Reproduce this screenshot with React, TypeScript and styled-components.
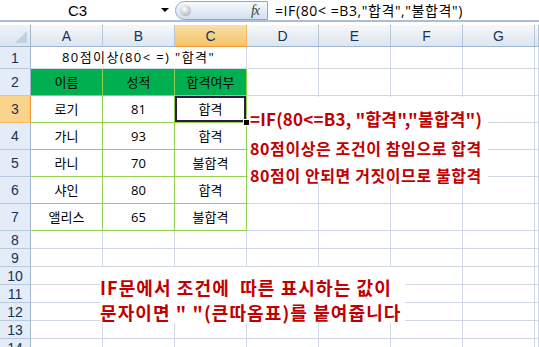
import { createGlobalStyle, styled, css } from "styled-components";

const FONT = `"Noto Sans CJK KR", "Noto Sans", sans-serif`;
const CELL_FONT = `"Open Sans", "Noto Sans CJK KR", sans-serif`;
const HEAD_FONT = `"Liberation Sans", "Noto Sans", sans-serif`;
const GRID = "#d0d7e5";
const GREEN_LINE = "#92d050";
const RED = "#c00000";

const GlobalStyle = createGlobalStyle`
  html, body {
    margin: 0;
    padding: 0;
    background: #fff;
  }
  body {
    font-family: ${FONT};
  }
`;

const Window = styled.div`
  width: 539px;
  height: 347px;
  overflow: hidden;
  background: #fff;
  display: flex;
  flex-direction: column;
`;

/* formula bar */
const FormulaBar = styled.div`
  display: flex;
  height: 23px;
  border-bottom: 2px solid #a9bed6;
  margin-bottom: 3px;
`;

const NameBox = styled.div`
  width: 155px;
  display: flex;
  align-items: center;
  justify-content: center;
  font-family: ${HEAD_FONT};
  font-size: 15px;
  color: #000;
`;

const DropArrow = styled.div`
  width: 20px;
  display: flex;
  align-items: center;
  justify-content: center;

  &::before {
    content: "";
    border-left: 4px solid transparent;
    border-right: 4px solid transparent;
    border-top: 4px solid #000;
  }
`;

const FxPill = styled.div`
  width: 93px;
  margin-top: 1px;
  box-sizing: border-box;
  display: flex;
  align-items: center;
  justify-content: space-between;
  padding: 0 8px 0 4px;
  border: 1px solid #8fa9c8;
  border-radius: 12px 0 0 12px;
  background: linear-gradient(#f6f9fc, #d3e0f0);
`;

const Knob = styled.span`
  width: 11px;
  height: 11px;
  border-radius: 50%;
  background: radial-gradient(circle at 40% 35%, #ffffff, #b9bec6 70%, #9aa1ab);
`;

const FxLabel = styled.span`
  font-family: "Liberation Serif", serif;
  font-style: italic;
  font-size: 14px;
  color: #444;
  letter-spacing: -1px;
`;

const FormulaText = styled.div`
  flex: 1;
  display: flex;
  align-items: center;
  padding-left: 7px;
  font-family: ${CELL_FONT};
  font-size: 14px;
  letter-spacing: 0.6px;
  color: #000;
  white-space: nowrap;
`;

/* sheet */
const Sheet = styled.div`
  position: relative;
  display: grid;
  grid-template-columns: 31px repeat(7, 72px) 1fr;
  grid-template-rows: 22px 22px 27px repeat(5, 27px) repeat(7, 18px);
`;

const Corner = styled.div`
  position: relative;
  box-sizing: border-box;
  background: linear-gradient(#eef3fa, #d9e3f0);
  border-right: 1px solid #9eb6ce;
  border-bottom: 1px solid #9eb6ce;

  &::after {
    content: "";
    position: absolute;
    right: 3px;
    bottom: 3px;
    border-left: 12px solid transparent;
    border-bottom: 12px solid #c4cfdc;
  }
`;

const ColHead = styled.div<{ $active?: boolean }>`
  box-sizing: border-box;
  display: flex;
  align-items: center;
  justify-content: center;
  font-family: ${HEAD_FONT};
  font-size: 14px;
  line-height: 1;
  color: #15325a;
  background: linear-gradient(#f6f8fb, #dde5ef);
  border-right: 1px solid #b5c6d9;
  border-bottom: 1px solid #9eb6ce;

  ${({ $active }) =>
    $active &&
    css`
      background: linear-gradient(#f9dea6, #f2c466);
      border-bottom-color: #f29436;
      border-right-color: #f2b864;
    `}
`;

const RowHead = styled.div<{ $active?: boolean }>`
  box-sizing: border-box;
  display: flex;
  align-items: center;
  justify-content: center;
  font-family: ${HEAD_FONT};
  font-size: 14px;
  line-height: 1;
  color: #15325a;
  background: #e4ecf7;
  border-right: 1px solid #9eb6ce;
  border-bottom: 1px solid #b8c9dc;

  ${({ $active }) =>
    $active &&
    css`
      background: #fbd48c;
      border-right-color: #f29436;
      border-bottom-color: #f2b864;
    `}
`;

type Tone = "plain" | "head" | "table";

const Cell = styled.div<{
  $tone?: Tone;
  $span?: number;
  $selected?: boolean;
  $track?: number;
}>`
  position: relative;
  box-sizing: border-box;
  display: flex;
  align-items: center;
  justify-content: center;
  font-family: ${CELL_FONT};
  font-size: 13px;
  line-height: 1;
  letter-spacing: ${({ $track }) => $track ?? 0}px;
  color: #000;
  white-space: nowrap;
  grid-column: span ${({ $span }) => $span ?? 1};
  border-right: 1px solid ${GRID};
  border-bottom: 1px solid ${GRID};

  ${({ $tone }) =>
    $tone === "head" &&
    css`
      background: #00b050;
      border-color: ${GREEN_LINE};
    `}

  ${({ $tone }) =>
    $tone === "table" &&
    css`
      border-color: ${GREEN_LINE};
    `}

  ${({ $selected }) =>
    $selected &&
    css`
      box-shadow: inset 0 0 0 2px #2e1a44;

      &::after {
        content: "";
        position: absolute;
        right: -4px;
        bottom: -4px;
        width: 5px;
        height: 5px;
        background: #000;
        border: 1px solid #fff;
        z-index: 2;
      }
    `}
`;

const NoteBox = styled.div`
  position: absolute;
  left: 248px;
  top: 72px;
  width: 240px;
  height: 86px;
  background: #fff;
  display: flex;
  flex-direction: column;
  padding-left: 2px;
  box-sizing: border-box;
`;

const NoteLine = styled.div<{ $size: number; $top: number; $track: number }>`
  font-size: ${({ $size }) => $size}px;
  letter-spacing: ${({ $track }) => $track}px;
  line-height: 22px;
  font-weight: 700;
  color: ${RED};
  white-space: pre;
  margin-top: ${({ $top }) => $top}px;
`;

const TipBox = styled.div`
  position: absolute;
  left: 100px;
  top: 242px;
  width: 305px;
  height: 56px;
  background: #fff;
  display: flex;
  flex-direction: column;
  padding-top: 8px;
  box-sizing: border-box;
`;

const TipLine = styled.div`
  font-size: 18px;
  line-height: 25px;
  font-weight: 700;
  color: ${RED};
  letter-spacing: 1.1px;
  white-space: pre;
`;

const COLS = ["A", "B", "C", "D", "E", "F", "G", ""];

const table = [
  ["로기", "81", "합격"],
  ["가니", "93", "합격"],
  ["라니", "70", "불합격"],
  ["샤인", "80", "합격"],
  ["앨리스", "65", "불합격"],
];

function Blank({ count }: { count: number }) {
  return (
    <>
      {Array.from({ length: count }, (_, i) => (
        <Cell key={i} />
      ))}
    </>
  );
}

export default function App() {
  return (
    <>
      <GlobalStyle />
      <Window>
        <FormulaBar>
          <NameBox>C3</NameBox>
          <DropArrow />
          <FxPill>
            <Knob />
            <FxLabel>fx</FxLabel>
          </FxPill>
          <FormulaText>=IF(80&lt; =B3,"합격","불합격")</FormulaText>
        </FormulaBar>

        <Sheet>
          <Corner />
          {COLS.map((c, i) => (
            <ColHead key={i} $active={c === "C"}>
              {c}
            </ColHead>
          ))}

          <RowHead>1</RowHead>
          <Cell $span={3} $track={1.4}>
            80점이상(80&lt; =) "합격"
          </Cell>
          <Blank count={5} />

          <RowHead>2</RowHead>
          <Cell $tone="head">이름</Cell>
          <Cell $tone="head">성적</Cell>
          <Cell $tone="head">합격여부</Cell>
          <Blank count={5} />

          {table.map((row, r) => (
            <div key={r} style={{ display: "contents" }}>
              <RowHead $active={r === 0}>{r + 3}</RowHead>
              <Cell $tone="table">{row[0]}</Cell>
              <Cell $tone="table">{row[1]}</Cell>
              <Cell $tone="table" $selected={r === 0}>
                {row[2]}
              </Cell>
              <Blank count={5} />
            </div>
          ))}

          {[8, 9, 10, 11, 12, 13, 14].map((n) => (
            <div key={n} style={{ display: "contents" }}>
              <RowHead>{n}</RowHead>
              <Blank count={8} />
            </div>
          ))}

          <NoteBox>
            <NoteLine $size={17} $top={11} $track={0.2}>
              =IF(80&lt;=B3, "합격","불합격")
            </NoteLine>
            <NoteLine $size={16} $top={7} $track={0.6}>
              80점이상은 조건이 참임으로 합격
            </NoteLine>
            <NoteLine $size={16} $top={5} $track={0.6}>
              80점이 안되면 거짓이므로 불합격
            </NoteLine>
          </NoteBox>

          <TipBox>
            <TipLine>IF문에서 조건에  따른 표시하는 값이</TipLine>
            <TipLine>문자이면 " "(큰따옴표)를 붙여줍니다</TipLine>
          </TipBox>
        </Sheet>
      </Window>
    </>
  );
}
